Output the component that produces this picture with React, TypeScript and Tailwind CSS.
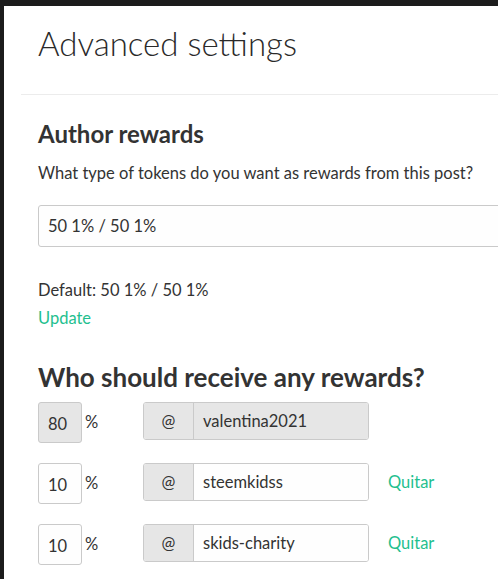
import React from 'react';

const font = { fontFamily: 'Lato, "Liberation Sans", sans-serif' };

type Beneficiary = { pct: string; name: string; locked?: boolean };

const rows: Beneficiary[] = [
  { pct: '80', name: 'valentina2021', locked: true },
  { pct: '10', name: 'steemkidss' },
  { pct: '10', name: 'skids-charity' },
];

const BeneficiaryRow = ({ row }: { row: Beneficiary }) => {
  const fieldBg = row.locked ? 'bg-[#e6e6e6]' : 'bg-[#fefefe]';
  return (
    <div className="flex items-start">
      <div className="flex w-[105px] items-start">
        <div
          className={`flex h-[41px] w-[44px] items-center rounded-[3px] border border-[#cacaca] pl-[9px] pt-[3px] text-[16.5px] text-[#333] ${fieldBg}`}
        >
          {row.pct}
        </div>
        <span className="ml-[3px] mt-[8px] text-[16.5px] text-[#333]">%</span>
      </div>
      <div className="flex h-[38px] w-[226px] overflow-hidden rounded-[3px] border border-[#cacaca]">
        <div className="flex w-[50px] items-center justify-center border-r border-[#cacaca] bg-[#e6e6e6] text-[16.5px] text-[#333]">
          @
        </div>
        <div className={`flex flex-1 items-center pl-[9px] text-[16.5px] text-[#333] ${fieldBg}`}>{row.name}</div>
      </div>
      {!row.locked && (
        <a className="ml-[19px] flex h-[38px] items-center text-[16.5px] text-[#1fbf8f]">Quitar</a>
      )}
    </div>
  );
};

export default function App() {
  return (
    <div className="h-[579px] w-[498px] overflow-hidden bg-[#1c1c1c] pl-[4px] pt-[6px]" style={font}>
      <div className="h-full overflow-hidden bg-white pl-[17px]">
        <div className="h-[89px] border-b border-[#ececec] pl-[17px] pt-[17px]">
          <h2 className="text-[33px] font-light leading-[40px] text-[#2a2a2a]">Advanced settings</h2>
        </div>
        <div className="pl-[17px]">
          <h3 className="mt-[24px] text-[24px] font-bold leading-[30px] text-[#333]">Author rewards</h3>
          <p className="mt-[12px] text-[16.5px] leading-[24px] text-[#333]">
            What type of tokens do you want as rewards from this post?
          </p>
          <div className="mt-[20px] flex h-[42px] w-[480px] items-center rounded-[3px] border border-[#cacaca] bg-[#fefefe] pl-[9px] text-[16.5px] text-[#333]">
            50 1% / 50 1%
          </div>
          <p className="mt-[31px] text-[16.5px] leading-[24px] text-[#333]">Default: 50 1% / 50 1%</p>
          <a className="mt-[2px] block text-[16.5px] leading-[28px] text-[#1fbf8f]">Update</a>
          <h3 className="mt-[29px] text-[26px] font-bold leading-[32px] text-[#333]">
            Who should receive any rewards?
          </h3>
          <div className="mt-[9px] flex flex-col gap-[20px]">
            {rows.map((r, i) => (
              <BeneficiaryRow key={i} row={r} />
            ))}
          </div>
        </div>
      </div>
    </div>
  );
}
